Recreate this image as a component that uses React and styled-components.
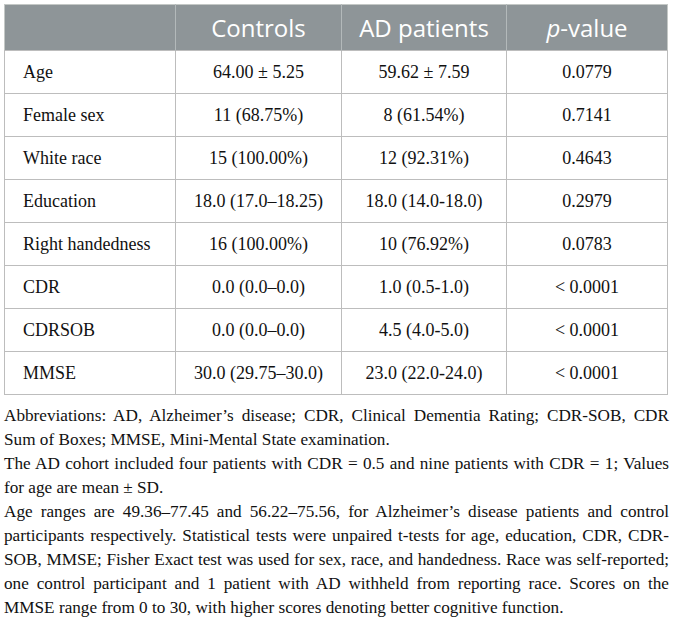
import styled, { createGlobalStyle } from "styled-components";

const GlobalStyle = createGlobalStyle`
  body {
    margin: 0;
    background: #ffffff;
  }
`;

const Page = styled.div`
  width: 673px;
  padding: 4px 4px 0 4px;
  box-sizing: border-box;
`;

const Table = styled.table`
  width: 663px;
  border-collapse: collapse;
  table-layout: fixed;
  border: 1px solid #c4c8c6;
`;

const HeadCell = styled.th`
  height: 45px;
  padding: 0;
  background: #8e9598;
  color: #ffffff;
  font-family: "Open Sans", "Noto Sans", sans-serif;
  font-weight: 400;
  font-size: 24px;
  text-align: center;
  vertical-align: middle;
  border-left: 1px solid #b3b9ba;
  &:first-child {
    border-left: none;
  }
`;

const Cell = styled.td`
  height: 42px;
  padding: 0 0 0 ${(p) => (p.$label ? "18px" : "0")};
  font-family: "Liberation Serif", "Times New Roman", serif;
  font-size: 18px;
  color: #111111;
  text-align: ${(p) => (p.$label ? "left" : "center")};
  vertical-align: middle;
  border: 1px solid #bdbdbd;
`;

const Notes = styled.div`
  margin-top: 9px;
  font-family: "Liberation Serif", "Times New Roman", serif;
  font-size: 17.2px;
  line-height: 24px;
  color: #111111;
  width: 665px;
`;

const Note = styled.p`
  margin: 0;
  text-align: justify;
`;

const rows = [
  ["Age", "64.00 ± 5.25", "59.62 ± 7.59", "0.0779"],
  ["Female sex", "11 (68.75%)", "8 (61.54%)", "0.7141"],
  ["White race", "15 (100.00%)", "12 (92.31%)", "0.4643"],
  ["Education", "18.0 (17.0–18.25)", "18.0 (14.0-18.0)", "0.2979"],
  ["Right handedness", "16 (100.00%)", "10 (76.92%)", "0.0783"],
  ["CDR", "0.0 (0.0–0.0)", "1.0 (0.5-1.0)", "< 0.0001"],
  ["CDRSOB", "0.0 (0.0–0.0)", "4.5 (4.0-5.0)", "< 0.0001"],
  ["MMSE", "30.0 (29.75–30.0)", "23.0 (22.0-24.0)", "< 0.0001"],
];

export default function App() {
  return (
    <Page>
      <GlobalStyle />
      <Table>
        <colgroup>
          <col style={{ width: 171 }} />
          <col style={{ width: 166 }} />
          <col style={{ width: 165 }} />
          <col style={{ width: 161 }} />
        </colgroup>
        <thead>
          <tr>
            <HeadCell />
            <HeadCell>Controls</HeadCell>
            <HeadCell>AD patients</HeadCell>
            <HeadCell>
              <i>p</i>-value
            </HeadCell>
          </tr>
        </thead>
        <tbody>
          {rows.map((r) => (
            <tr key={r[0]}>
              <Cell $label>{r[0]}</Cell>
              <Cell>{r[1]}</Cell>
              <Cell>{r[2]}</Cell>
              <Cell>{r[3]}</Cell>
            </tr>
          ))}
        </tbody>
      </Table>
      <Notes>
        <Note>
          Abbreviations: AD, Alzheimer’s disease; CDR, Clinical Dementia Rating; CDR-SOB, CDR
          Sum of Boxes; MMSE, Mini-Mental State examination.
        </Note>
        <Note>
          The AD cohort included four patients with CDR = 0.5 and nine patients with CDR = 1; Values
          for age are mean ± SD.
        </Note>
        <Note>
          Age ranges are 49.36–77.45 and 56.22–75.56, for Alzheimer’s disease patients and control
          participants respectively. Statistical tests were unpaired t-tests for age, education, CDR, CDR-SOB,
          MMSE; Fisher Exact test was used for sex, race, and handedness. Race was self-reported;
          one control participant and 1 patient with AD withheld from reporting race. Scores on the
          MMSE range from 0 to 30, with higher scores denoting better cognitive function.
        </Note>
      </Notes>
    </Page>
  );
}
